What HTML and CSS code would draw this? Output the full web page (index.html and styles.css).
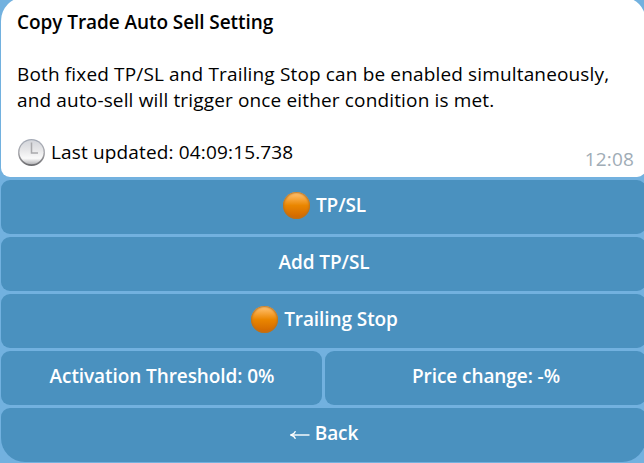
FILE: index.html
```
<!DOCTYPE html>
<html lang="en">
  <head>
    <meta charset="UTF-8" />
    <title>Copy Trade Auto Sell Setting</title>
    <link rel="stylesheet" href="styles.css">
  </head>
  <body>
    <div class="chat">
      <div class="message">
        <h1>Copy Trade Auto Sell Setting</h1>
        <p>
          Both fixed TP/SL and Trailing Stop can be enabled simultaneously,<br />
          and auto-sell will trigger once either condition is met.
        </p>
        <div class="message-footer">
          <svg class="clock" viewBox="0 0 28 28">
            <defs>
              <linearGradient id="rim" x1="0" y1="0" x2="0" y2="1">
                <stop offset="0" stop-color="#a3a9b5" />
                <stop offset="0.5" stop-color="#aaaaaf" />
                <stop offset="1" stop-color="#68686b" />
              </linearGradient>
              <linearGradient id="face" x1="0" y1="0" x2="0" y2="1">
                <stop offset="0" stop-color="#d3d5da" />
                <stop offset="0.4" stop-color="#e6e6e8" />
                <stop offset="0.75" stop-color="#fafafa" />
                <stop offset="1" stop-color="#b5b5b8" />
              </linearGradient>
            </defs>
            <circle cx="14.5" cy="13.5" r="13.5" fill="url(#rim)" />
            <circle cx="14.5" cy="13.3" r="12" fill="url(#face)" />
            <path d="M14.5 3.5v10.5H21" fill="none" stroke="#a9a9ac" stroke-width="1.5" />
          </svg>
          <span class="updated">Last updated: 04:09:15.738</span>
          <span class="time">12:08</span>
        </div>
      </div>

      <div class="keyboard">
        <button class="key wide">
          <span class="dot"></span>TP/SL
        </button>
        <button class="key wide">Add TP/SL</button>
        <button class="key wide">
          <span class="dot"></span>Trailing Stop
        </button>
        <button class="key">Activation Threshold: 0%</button>
        <button class="key">Price change: -%</button>
        <button class="key wide last">
          <svg class="arrow" viewBox="0 0 20 12">
            <path d="M1 6h18.5" fill="none" stroke="#fff" stroke-width="1.4" />
            <path d="M5.5 2.2Q4.2 5 1 6Q4.2 7 5.5 9.8" fill="none" stroke="#fff" stroke-width="1.4" />
          </svg>
          Back
        </button>
      </div>
    </div>
  </body>
</html>
```

FILE: styles.css
```
body {
  margin: 0;
  height: 463px;
  overflow: hidden;
  background: #72b1df;
  font-family: "Open Sans", "Noto Sans", sans-serif;
  font-size: 19px;
  line-height: 26px;
  letter-spacing: 0.15px;
  color: #000;
}

/* slightly wider than the window, the right edge is cut off */
.chat {
  width: 645px;
  margin: -3px 0 0 1px;
}

.message {
  box-sizing: border-box;
  height: 180px;
  padding: 12px 12px 0 16px;
  background: #fff;
  border-radius: 24px 24px 9px 9px;
}

h1 {
  margin: 0 0 26px;
  font-size: 19px;
  line-height: 26px;
  font-weight: 600;
  letter-spacing: -0.07px;
}

p {
  margin: 0 0 26px;
  white-space: nowrap;
}

.message-footer {
  display: flex;
  height: 28px;
}

.clock {
  width: 28px;
  height: 28px;
  margin-right: 6px;
}

.time {
  margin: 7px 0 0 auto;
  font-size: 19px;
  color: #a0acb6;
}

.keyboard {
  display: grid;
  grid-template-columns: 1fr 1fr;
  gap: 3px;
  margin-top: 3px;
}

.key {
  box-sizing: border-box;
  display: flex;
  align-items: center;
  justify-content: center;
  height: 54px;
  padding: 0 0 4px 1px;
  border: none;
  border-radius: 9px;
  background: #4a91bf;
  color: #fff;
  font-family: inherit;
  font-size: 19px;
  font-weight: 550;
  line-height: 26px;
  letter-spacing: -0.08px;
}

.wide {
  grid-column: span 2;
}

.last {
  border-radius: 9px 9px 24px 24px;
}

.dot {
  width: 27px;
  height: 27px;
  margin: 0 6px 0 1px;
  border-radius: 50%;
  background: linear-gradient(#ffc272 4%, #f5a030 30%, #ea8600 50%, #d56b00 90%);
  box-shadow: inset 0 0 2px 1px #b8721f;
}

.arrow {
  width: 20px;
  height: 12px;
  margin: 4px 5px 0 0;
}
```
